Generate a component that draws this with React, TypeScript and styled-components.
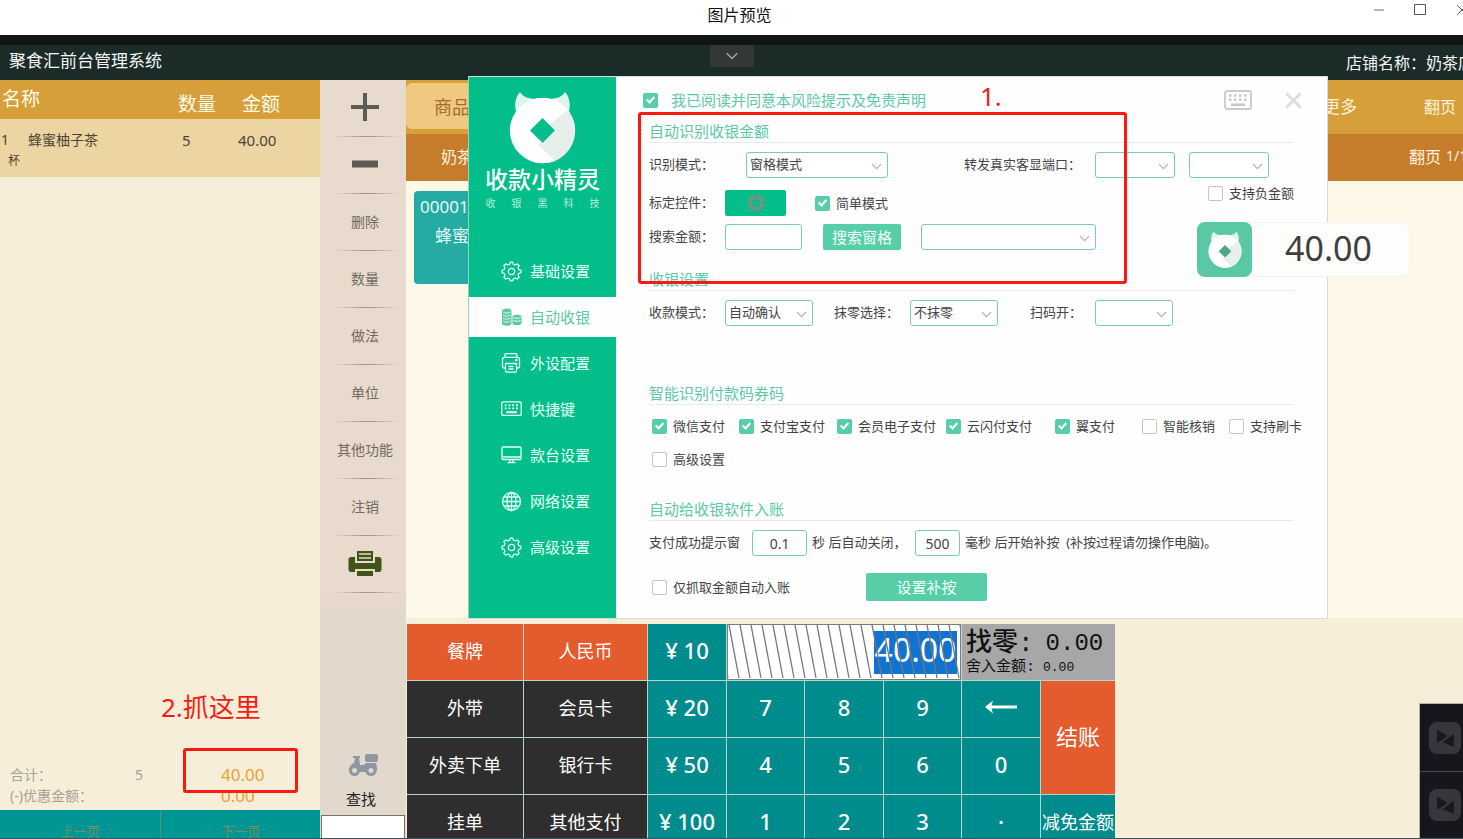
import React from 'react';
import styled, { createGlobalStyle, css } from 'styled-components';
import { ChevronDown, Minus, X } from 'lucide-react';

const GlobalStyle = createGlobalStyle`
  *, *::before, *::after { box-sizing: border-box; }
  body {
    margin: 0;
    overflow: hidden;
    font-family: "Noto Sans", "Noto Sans CJK SC", sans-serif;
    color: #444;
  }
  button, input, select { font-family: inherit; color: inherit; margin: 0; }
  button { border: 0; padding: 0; background: none; white-space: nowrap; }
  svg { display: block; flex: none; }
`;

const colors = {
  green: '#03bd8b',
  mint: '#57cda8',
  mintText: '#5cc8a6',
  teal: '#008c8c',
  orange: '#e45b2d',
  gold: '#d79f39',
  red: '#fb1a10',
};

/* ---------- Window frame ---------- */

const Window = styled.div`
  position: relative;
  display: flex;
  flex-direction: column;
  height: 100vh;
  overflow: hidden;
  border-bottom: 1px solid #40545c;
  background: #fff;
`;

const TitleBar = styled.header`
  display: grid;
  grid-template-columns: 1fr auto 1fr;
  flex: none;
  height: 35px;
  padding-left: 16px;
`;

const WindowTitle = styled.h1`
  grid-column: 2;
  margin: 0;
  font-size: 16px;
  line-height: 30px;
  font-weight: 400;
  color: #111;
`;

const WindowButtons = styled.div`
  display: flex;
  justify-content: flex-end;
  gap: 26px;
  height: 20px;
  margin-right: -8px;
  color: #555;
  button { display: flex; align-items: center; }
`;

const StoreBar = styled.div`
  display: grid;
  grid-template-columns: 1fr auto 1fr;
  flex: none;
  height: 45px;
  border-top: 10px solid #111413;
  background: #1a2b28;
  color: #f4f6f5;
  white-space: nowrap;
`;

const SystemName = styled.span`
  padding-left: 9px;
  font-size: 17px;
  line-height: 32px;
`;

const StoreName = styled.span`
  justify-self: end;
  width: 117px;
  overflow: hidden;
  font-size: 16px;
  line-height: 36px;
`;

const PullTab = styled.button`
  display: grid;
  place-items: center;
  width: 44px;
  height: 22px;
  background: #343737;
  color: #a5a9a8;
`;

const Body = styled.main`
  display: grid;
  grid-template-columns: 320px 86px minmax(0, 1fr);
  flex: 1;
  min-height: 0;
`;

/* ---------- Order list ---------- */

const OrderPanel = styled.section`
  display: flex;
  flex-direction: column;
  min-height: 0;
  background: #f7eed9;
`;

const OrderTable = styled.table`
  width: 100%;
  table-layout: fixed;
  border-collapse: collapse;
  th, td { padding: 0; text-align: left; font-weight: 400; }
  th {
    height: 39px;
    background: ${colors.gold};
    color: #fffbe9;
    font-size: 19px;
    line-height: 30px;
    vertical-align: bottom;
  }
  th:first-child { padding-left: 2px; vertical-align: top; line-height: 38px; }
  td {
    height: 58px;
    padding-top: 11px;
    background: #edd4a3;
    color: #4c4334;
    font-size: 15px;
    line-height: 20px;
    vertical-align: top;
  }
`;

const ItemLine = styled.div`
  display: grid;
  grid-template-columns: 27px 1fr;
  padding-left: 1px;
  font-size: 14px;
`;

const ItemUnit = styled.div`
  padding-left: 8px;
  font-size: 12px;
  line-height: 22px;
`;

const Quantity = styled.span`
  padding-left: 4px;
`;

const Totals = styled.dl`
  display: grid;
  grid-template-columns: 125px 86px 1fr;
  margin: auto 0 4px;
  padding-left: 10px;
  color: #a7a196;
  font-size: 14px;
  line-height: 21px;
  dt, dd { margin: 0; white-space: nowrap; }
`;

const TotalAmount = styled.dd`
  color: #eb9f35;
  font-size: 17px;
`;

const Pager = styled.div`
  display: grid;
  grid-template-columns: 1fr 1fr;
  flex: none;
  height: 28px;
  overflow: hidden;
  background: #009693;
`;

const PagerButton = styled.button`
  padding-top: 13px;
  color: #7f8a5c;
  font-size: 13px;
  line-height: 16px;
  & + & { border-left: 1px solid #4f9174; }
`;

/* ---------- Operation column ---------- */

const Operations = styled.nav`
  display: flex;
  flex-direction: column;
  min-height: 0;
  background: linear-gradient(#e8dacd 0, #e8dacd 514px, #e2d9cc 530px);
`;

const Operation = styled.button`
  position: relative;
  display: grid;
  place-items: center;
  flex: none;
  height: 57px;
  padding: 0 0 3px 4px;
  color: #706a62;
  font-size: 14px;
  &::after {
    content: '';
    position: absolute;
    left: 14px;
    right: 6px;
    bottom: 0;
    height: 1px;
    background: linear-gradient(90deg, transparent, #9c9287 50%, transparent);
  }
`;

const FindButton = styled.button`
  display: flex;
  flex-direction: column;
  align-items: center;
  gap: 12px;
  margin-top: auto;
  padding: 0 0 6px;
  padding-right: 4px;
  color: #222;
  font-size: 15px;
  line-height: 20px;
  svg { margin-left: 4px; }
`;

const FindInput = styled.input`
  flex: none;
  width: 84px;
  height: 23px;
  margin-left: 1px;
  border: 1px solid #77736c;
  border-bottom: 0;
  background: #fff;
`;

/* ---------- Catalogue ---------- */

const Catalogue = styled.section`
  display: flex;
  flex-direction: column;
  min-width: 0;
  min-height: 0;
  background: #f7eed9;
`;

const CategoryBar = styled.div<{ $sub?: boolean }>`
  display: flex;
  align-items: center;
  justify-content: space-between;
  flex: none;
  height: ${p => (p.$sub ? 47 : 54)}px;
  padding-bottom: 3px;
  background: ${p => (p.$sub ? '#c57d2c' : colors.gold)};
  color: #fff3dc;
  white-space: nowrap;
`;

const CategoryTab = styled.button<{ $active?: boolean }>`
  width: 120px;
  height: 46px;
  padding-left: ${p => (p.$active ? 28 : 35)}px;
  border-radius: 6px;
  background: ${p => (p.$active ? '#f0c981' : 'transparent')};
  color: ${p => (p.$active ? '#a06f27' : '#fff3dc')};
  font-size: ${p => (p.$active ? 18 : 16)}px;
  text-align: left;
`;

const CategoryEnd = styled.div<{ $width: number }>`
  display: flex;
  width: ${p => p.$width}px;
  overflow: hidden;
`;

const MoreButton = styled.button`
  width: 101px;
  text-align: left;
  font-size: 17px;
`;

const PageLabel = styled.button`
  font-size: 16px;
`;

const PageCount = styled.span`
  padding-left: 5px;
  font-size: 14px;
  line-height: 30px;
`;

const Products = styled.div`
  flex: 1;
  min-height: 0;
  padding: 10px 8px;
  background: #fef8e9;
`;

const Product = styled.button`
  display: flex;
  flex-direction: column;
  align-items: flex-start;
  gap: 5px;
  width: 120px;
  height: 93px;
  padding: 4px 6px;
  border-radius: 4px;
  background: #26aaa4;
  color: #e2fbf8;
  font-size: 17px;
  line-height: 24px;
`;

const ProductName = styled.span`
  padding-left: 15px;
`;

/* ---------- Keypad ---------- */

const KeypadArea = styled.div`
  flex: none;
  height: 220px;
  padding: 6px 0 0 1px;
  overflow: hidden;
`;

const Keypad = styled.div`
  display: grid;
  grid-template-columns: 116px 123px 78px 77px 78px 77px 78px 74px;
  grid-auto-rows: 56px;
  gap: 1px;
  width: max-content;
  background: #b9d3cf;
`;

type Tone = 'dark' | 'orange' | 'teal';
const tones: Record<Tone, string> = { dark: '#2e2e2e', orange: colors.orange, teal: colors.teal };

const Key = styled.button<{ $tone: Tone; $word?: boolean; $tall?: boolean }>`
  display: grid;
  place-items: center;
  padding-bottom: ${p => (p.$word ? 2 : 4)}px;
  background: ${p => tones[p.$tone]};
  color: #fff;
  font-size: ${p => (p.$word ? 18 : 22)}px;
  font-weight: ${p => (p.$word || p.$tall ? 400 : 500)};
  line-height: 30px;
  overflow: hidden;
  ${p => p.$tall && css`grid-row: span 2;`}
`;

const Display = styled.div`
  position: relative;
  grid-column: span 3;
  display: flex;
  align-items: center;
  justify-content: flex-end;
  padding-right: 3px;
  border: 1px solid #7c7c7c;
  background: #fff;
`;

const Hatch = styled.svg`
  position: absolute;
  inset: 0;
  width: 100%;
  height: 100%;
  pointer-events: none;
`;

const DisplayInput = styled.input`
  width: 83px;
  height: 43px;
  padding: 0 0 5px;
  border: 0;
  background: #0f73d2;
  color: #fff;
  font-size: 32px;
  text-align: center;
`;

const ChangePanel = styled.div`
  grid-column: span 2;
  padding: 5px 4px 0;
  background: #a7a7a7;
  color: #111;
  font-family: "Liberation Mono", "Noto Sans CJK SC", monospace;
  white-space: nowrap;
`;

const ChangeLine = styled.div<{ $large?: boolean }>`
  display: flex;
  align-items: center;
  font-size: ${p => (p.$large ? 26 : 15)}px;
  line-height: ${p => (p.$large ? 30 : 18)}px;
  font-weight: ${p => (p.$large ? 500 : 400)};
  span:last-child {
    font-size: ${p => (p.$large ? 24 : 13)}px;
    padding-left: ${p => (p.$large ? 12 : 8)}px;
  }
`;

/* ---------- Settings dialog ---------- */

const Dialog = styled.section`
  position: absolute;
  left: 468px;
  top: 76px;
  display: flex;
  width: 860px;
  height: 543px;
  border: 1px solid #d9dcd6;
  border-left-color: #8fd9bf;
  background: #fefefe;
  font-size: 13px;
  line-height: 20px;
`;

const Sidebar = styled.aside`
  display: flex;
  flex-direction: column;
  flex: none;
  width: 147px;
  padding-top: 15px;
  background: ${colors.green};
  color: #e9fff8;
`;

const Brand = styled.div`
  display: flex;
  flex-direction: column;
  align-items: center;
  height: 159px;
`;

const BrandName = styled.strong`
  margin-top: 2px;
  font-size: 23px;
  line-height: 26px;
  font-weight: 500;
  color: #fff;
`;

const BrandTagline = styled.div`
  display: flex;
  justify-content: space-between;
  width: 114px;
  margin-top: 4px;
  font-size: 10px;
  line-height: 14px;
  color: #b5f0dd;
`;

const SideMenu = styled.nav`
  display: flex;
  flex-direction: column;
  gap: 6px;
`;

const SideItem = styled.button<{ $active?: boolean }>`
  display: flex;
  align-items: center;
  gap: 8px;
  height: 40px;
  padding-left: 32px;
  background: ${p => (p.$active ? '#fefefe' : 'transparent')};
  color: ${p => (p.$active ? colors.mintText : '#e4fff7')};
  font-size: 15px;
  span { padding-bottom: 2px; }
`;

const Content = styled.div`
  flex: 1;
  min-width: 0;
  padding: 13px 20px 0 27px;
`;

const DialogHead = styled.div`
  display: flex;
  align-items: center;
  justify-content: space-between;
  height: 20px;
`;

const DialogTools = styled.div`
  display: flex;
  align-items: center;
  gap: 29px;
  padding-right: 1px;
  color: #c9c9c9;
  button + button { color: #dedede; }
`;

const Section = styled.section<{ $top: number }>`
  margin: ${p => p.$top}px 13px 0 6px;
`;

const SectionTitle = styled.h2`
  margin: 0 0 9px;
  padding-bottom: 2px;
  border-bottom: 1px solid #e9ebea;
  color: ${colors.mintText};
  font-size: 15px;
  line-height: 18px;
  font-weight: 400;
`;

const Row = styled.div<{ $top?: number }>`
  display: flex;
  align-items: center;
  min-height: 26px;
  margin-top: ${p => p.$top ?? 0}px;
  white-space: nowrap;
`;

const Split = styled.div`
  display: flex;
  justify-content: space-between;
`;

const FieldLabel = styled.label<{ $width?: number; $before?: number }>`
  flex: none;
  width: ${p => (p.$width ? `${p.$width}px` : 'auto')};
  margin-left: ${p => p.$before ?? 0}px;
  padding-bottom: 2px;
`;

const field = css`
  height: 26px;
  border: 1px solid #79cdb2;
  border-radius: 3px;
  background: #fff;
  font-size: 13px;
`;

const SelectBox = styled.span<{ $width: number; $before?: number }>`
  position: relative;
  flex: none;
  width: ${p => p.$width}px;
  margin-left: ${p => p.$before ?? 0}px;
  svg { position: absolute; right: 3px; top: 6px; color: #aeb3b1; pointer-events: none; }
`;

const Select = styled.select`
  ${field}
  display: block;
  width: 100%;
  padding: 0 20px 2px 3px;
  appearance: none;
`;

const TextInput = styled.input<{ $width: number; $before?: number; $after?: number }>`
  ${field}
  flex: none;
  width: ${p => p.$width}px;
  margin: 0 ${p => p.$after ?? 0}px 0 ${p => p.$before ?? 0}px;
  font-size: 14px;
  text-align: center;
`;

const SolidButton = styled.button<{ $width: number; $before?: number; $deep?: boolean; $tall?: boolean }>`
  display: grid;
  place-items: center;
  flex: none;
  width: ${p => p.$width}px;
  height: ${p => (p.$tall ? 28 : 26)}px;
  margin-left: ${p => p.$before ?? 0}px;
  border-radius: 2px;
  background: ${p => (p.$deep ? colors.green : colors.mint)};
  color: #f4fffb;
  font-size: 15px;
  line-height: 24px;
`;

const CheckLabel = styled.label<{ $before?: number; $head?: boolean }>`
  display: flex;
  align-items: center;
  gap: ${p => (p.$head ? 13 : 6)}px;
  margin-left: ${p => p.$before ?? 0}px;
  white-space: nowrap;
  ${p => p.$head && css`color: ${colors.mintText}; font-size: 15px;`}
`;

const CheckBox = styled.input`
  position: relative;
  flex: none;
  width: 15px;
  height: 15px;
  border: 1px solid #c3c6c5;
  border-radius: 2px;
  background: #fff;
  appearance: none;
  &:checked { border-color: ${colors.mint}; background: ${colors.mint}; }
  &:checked::after {
    content: '';
    position: absolute;
    left: 4px;
    top: 1px;
    width: 5px;
    height: 8px;
    border: solid #fff;
    border-width: 0 2px 2px 0;
    transform: rotate(42deg);
  }
`;

const PayGrid = styled.div`
  display: grid;
  grid-template-columns: 87px 98px 109px 109px 87px 87px 70px;
  row-gap: 13px;
  padding: 2px 0 1px 3px;
`;

const NegativeRow = styled.div`
  display: flex;
  justify-content: flex-end;
  margin-top: 5px;
`;

/* ---------- Overlays ---------- */

const AmountWidget = styled.div`
  position: absolute;
  left: 1197px;
  top: 222px;
  display: flex;
  align-items: center;
  width: 213px;
  height: 55px;
  border: 1px solid #f3f2ee;
  border-radius: 8px;
  background: #fdfdfc;
  color: #3f3f3f;
  font-size: 34px;
  line-height: 50px;
  span { padding-bottom: 4px; }
`;

const WidgetIcon = styled.div`
  display: grid;
  place-items: center;
  width: 55px;
  height: 55px;
  margin: 0 33px 0 -1px;
  border-radius: 8px;
  background: #59c9a5;
`;

const Frame = styled.div<{ $x: number; $y: number; $w: number; $h: number }>`
  position: absolute;
  left: ${p => p.$x}px;
  top: ${p => p.$y}px;
  width: ${p => p.$w}px;
  height: ${p => p.$h}px;
  border: 3px solid ${colors.red};
  border-radius: 3px;
  pointer-events: none;
`;

const Note = styled.span<{ $x: number; $y: number }>`
  position: absolute;
  left: ${p => p.$x}px;
  top: ${p => p.$y}px;
  color: ${colors.red};
  font-size: 26px;
  line-height: 32px;
  white-space: nowrap;
`;

const CornerDock = styled.div`
  position: absolute;
  right: 0;
  bottom: 0;
  width: 44px;
  border: 1px solid #b9b4a2;
  border-width: 1px 0 0 1px;
  background: #15171c;
`;

const DockButton = styled.button`
  display: flex;
  align-items: center;
  width: 100%;
  height: 67px;
  padding-left: 9px;
  & + & { border-top: 1px solid #4a4c50; }
`;

/* ---------- Drawings ---------- */

function Mascot({ width, height, hole }: { width: number; height: number; hole: string }) {
  return (
    <svg width={width} height={height} viewBox="0 0 67 72" aria-hidden="true">
      <path d="M7 19C5 12 7 4 11 0c3 5 9 7 17 7h11c8 0 14-2 17-7 4 4 6 12 4 19z" fill="#def5ee" />
      <circle cx="33.500" cy="38.500" r="32.700" fill="#fff" />
      <path d="M59 18 46 28 33.500 38.500 46 39 33.500 51l-6 1L46 69c17-7 27-31 13-51z" fill="#e6efec" />
      <path d="M14 38 46 69c-8 3-17 3-24 0z" fill="#fff" />
      <path d="m33.500 26 12.500 12.500L33.500 51 21 38.500z" fill={hole} />
    </svg>
  );
}

function CoinsIcon() {
  return (
    <svg width="21" height="20" viewBox="0 0 21 20" aria-hidden="true">
      <path d="M1 4c0-3.500 9.500-3.500 9.500 0v12.500c0 3-9.500 3-9.500 0z" fill="currentColor" />
      <path d="M11.500 9.500c0-2.500 9-2.500 9 0V16c0 3-9 3-9 0z" fill="currentColor" />
      <path d="M2 5c1.500 1.500 6 1.500 7.500 0M2 8c1.500 1.500 6 1.500 7.500 0M2 11c1.500 1.500 6 1.500 7.500 0M2 14c1.500 1.500 6 1.500 7.500 0M12.500 10.500c1.500 1 5.500 1 7 0M12.500 13.500c1.500 1 5.500 1 7 0" fill="none" stroke="#e8fbf4" strokeWidth="1" />
    </svg>
  );
}

function ReceiptPrinterIcon() {
  return (
    <svg width="21" height="20" viewBox="0 0 21 20" fill="none" stroke="currentColor" strokeWidth="1.300" aria-hidden="true">
      <path d="M4 4V2c0-.8.500-1.300 1.300-1.300h9.400c.8 0 1.300.5 1.300 1.300v2M4.500 15H3c-1 0-1.500-.5-1.500-1.500v-7C1.500 5 2.200 4.300 3.500 4.300h13c1.300 0 2 .7 2 2.200v7c0 1-.5 1.500-1.500 1.500h-1.500" />
      <path d="M4.500 10.500h11v7c0 1-.5 1.700-1.500 1.700H6c-1 0-1.500-.7-1.500-1.700zM7.500 13.500h5M7.500 16h5" />
      <path d="M14 7h2.500" strokeWidth="2" />
    </svg>
  );
}

function KeyboardIcon({ width, heavy }: { width: number; heavy?: boolean }) {
  return (
    <svg width={width} height={heavy ? 20 : 16} viewBox={heavy ? '0 0 28 20' : '0 0 28 21'} fill="none" stroke="currentColor" strokeWidth="1.800" aria-hidden="true">
      <rect x="1" y="1" width="26" height="18" rx="2" />
      <path d="M5 5.500h2.500M10 5.500h2.500M15 5.500h2.500M20 5.500h2.500M5 9.700h2.500M10 9.700h2.500M15 9.700h2.500M20 9.700h2.500" strokeWidth="2.400" />
      <path d="M7 14.800h14" strokeWidth="2.600" />
    </svg>
  );
}

function MonitorIcon() {
  return (
    <svg width="21" height="18" viewBox="0 0 21 18" fill="none" stroke="currentColor" strokeWidth="1.300" aria-hidden="true">
      <rect x="1" y="1" width="19" height="12.500" rx="1" />
      <path d="M1.500 11h18M9 13.500v2.800M12 13.500v2.800M6.500 16.700h8" />
    </svg>
  );
}

function GlobeIcon() {
  return (
    <svg width="21" height="21" viewBox="0 0 21 21" fill="none" stroke="currentColor" strokeWidth="1.300" aria-hidden="true">
      <circle cx="10.500" cy="10.500" r="9" />
      <ellipse cx="10.500" cy="10.500" rx="4.500" ry="9" />
      <path d="M10.500 1.500v18M1.500 10.500h18M3 6h15M3 15h15" />
    </svg>
  );
}

function GearIcon() {
  return (
    <svg width="21" height="21" viewBox="0 0 20 20" fill="none" stroke="currentColor" strokeWidth="1.200" strokeLinejoin="round" aria-hidden="true">
      <path d="m8.300 3 .5-2h2.400l.5 2 2 .8 1.800-1.100 1.800 1.800-1.100 1.800.8 2 2 .5v2.400l-2 .5-.8 2 1.100 1.800-1.800 1.800-1.800-1.100-2 .8-.5 2H8.800l-.5-2-2-.8-1.800 1.100-1.800-1.800 1.100-1.800-.8-2-2-.5V8.800l2-.5.8-2-1.100-1.800 1.800-1.800 1.800 1.100z" />
      <circle cx="10" cy="10" r="3" />
    </svg>
  );
}

function TargetIcon() {
  return (
    <svg width="20" height="20" viewBox="0 0 20 20" fill="none" aria-hidden="true">
      <circle cx="10" cy="10" r="6.500" stroke="#78947f" strokeWidth="4" />
      <path d="M10 0v7M10 13v7M0 10h7M13 10h7" stroke={colors.green} strokeWidth="1.500" />
      <path d="M10 5v3M10 12v3M5 10h3M12 10h3" stroke="#78947f" strokeWidth="1.500" />
    </svg>
  );
}

function PrinterIcon() {
  return (
    <svg width="34" height="27" viewBox="0 0 34 27" aria-hidden="true">
      <path d="M3 7h4v6h20V7h4c1.500 0 2.500 1 2.500 2.500v10c0 1.500-1 2.500-2.500 2.500h-4v-3H7v3H3C1.500 22 .5 21 .5 19.500v-10C.5 8 1.500 7 3 7z" fill="#405419" />
      <path d="M9 1h16v10H9z" fill="#405419" />
      <path d="M11 4h12M11 8h12" stroke="#e8dacd" strokeWidth="1.500" />
      <path d="M9 21h16v5H9z" fill="#405419" />
    </svg>
  );
}

function ScooterIcon() {
  return (
    <svg width="31" height="24" viewBox="0 0 31 24" fill="#8e97a3" aria-hidden="true">
      <rect x="17" y="1" width="13" height="8" rx="2" />
      <path d="M5 3h7v2h-1l1 7h4l2-2h10l1 5v3h-3v-2H8v2H1c0-4 2-7 5-8l1-5H5z" />
      <circle cx="6.500" cy="17.500" r="4" fill="#e2d9cc" stroke="#8e97a3" strokeWidth="3" />
      <circle cx="23" cy="17.500" r="4" fill="#e2d9cc" stroke="#8e97a3" strokeWidth="3" />
      <path d="M10 15h9v4h-9z" />
    </svg>
  );
}

function DockIcon() {
  return (
    <svg width="32" height="32" viewBox="0 0 32 32" aria-hidden="true">
      <rect width="32" height="32" rx="8" fill="#35373c" />
      <path d="M8 7.500 18.500 14 8 21zM25 12v13l-12-5z" fill="#17191e" />
      <path d="m11 21.500 11-9" stroke="#35373c" strokeWidth="1.500" />
    </svg>
  );
}

function BackArrow() {
  return (
    <svg width="34" height="16" viewBox="0 0 34 16" aria-hidden="true">
      <path d="M4 8h29" stroke="#fff" strokeWidth="3" />
      <path d="M9 1.500 1 8l8 6.500L7 8z" fill="#fff" />
    </svg>
  );
}

/* ---------- Composed controls ---------- */

interface DropDownProps { label: string; id?: string; value?: string; width: number; before?: number }

function DropDown({ label, id, value = '', width, before }: DropDownProps) {
  return (
    <SelectBox $width={width} $before={before}>
      <Select id={id} aria-label={label} defaultValue={value}>
        <option value={value}>{value}</option>
      </Select>
      <ChevronDown size={17} strokeWidth={1.8} />
    </SelectBox>
  );
}

interface CheckProps { text: string; checked?: boolean; before?: number; head?: boolean }

function Check({ text, checked, before, head }: CheckProps) {
  return (
    <CheckLabel $before={before} $head={head}>
      <CheckBox type="checkbox" defaultChecked={checked} />
      {text}
    </CheckLabel>
  );
}

const menu = [
  { text: '基础设置', icon: <GearIcon /> },
  { text: '自动收银', icon: <CoinsIcon />, active: true },
  { text: '外设配置', icon: <ReceiptPrinterIcon /> },
  { text: '快捷键', icon: <KeyboardIcon width={21} /> },
  { text: '款台设置', icon: <MonitorIcon /> },
  { text: '网络设置', icon: <GlobeIcon /> },
  { text: '高级设置', icon: <GearIcon /> },
];

const payments = [
  { text: '微信支付', checked: true },
  { text: '支付宝支付', checked: true },
  { text: '会员电子支付', checked: true },
  { text: '云闪付支付', checked: true },
  { text: '翼支付', checked: true },
  { text: '智能核销' },
  { text: '支持刷卡' },
  { text: '高级设置' },
];

function SettingsDialog() {
  return (
    <Dialog role="dialog" aria-label="收款小精灵">
      <Sidebar>
        <Brand>
          <Mascot width={67} height={72} hole={colors.green} />
          <BrandName>收款小精灵</BrandName>
          <BrandTagline>
            {['收', '银', '黑', '科', '技'].map(c => <span key={c}>{c}</span>)}
          </BrandTagline>
        </Brand>
        <SideMenu>
          {menu.map(m => (
            <SideItem key={m.text} $active={m.active}>{m.icon}<span>{m.text}</span></SideItem>
          ))}
        </SideMenu>
      </Sidebar>
      <Content>
        <DialogHead>
          <Check head checked text="我已阅读并同意本风险提示及免责声明" />
          <DialogTools>
            <button aria-label="键盘"><KeyboardIcon width={28} heavy /></button>
            <button aria-label="关闭"><X size={25} strokeWidth={3} /></button>
          </DialogTools>
        </DialogHead>

        <Section $top={12}>
          <SectionTitle>自动识别收银金额</SectionTitle>
          <Split>
            <div>
              <Row>
                <FieldLabel $width={97} htmlFor="mode">识别模式：</FieldLabel>
                <DropDown id="mode" label="识别模式" value="窗格模式" width={142} />
              </Row>
              <Row $top={12}>
                <FieldLabel $width={76} htmlFor="target">标定控件：</FieldLabel>
                <SolidButton id="target" $width={61} $deep><TargetIcon /></SolidButton>
                <Check checked text="简单模式" before={29} />
              </Row>
            </div>
            <div>
              <Row>
                <FieldLabel $width={131} htmlFor="port">转发真实客显端口：</FieldLabel>
                <DropDown id="port" label="转发真实客显端口" width={80} />
                <DropDown label="波特率" width={80} before={14} />
                <FieldLabel as="span" $width={25} />
              </Row>
              <NegativeRow><Check text="支持负金额" /></NegativeRow>
            </div>
          </Split>
          <Row $top={8}>
            <FieldLabel $width={76} htmlFor="amount">搜索金额：</FieldLabel>
            <TextInput id="amount" $width={77} />
            <SolidButton $width={78} $before={21}>搜索窗格</SolidButton>
            <DropDown label="窗格" width={175} before={20} />
          </Row>
        </Section>

        <Section $top={20}>
          <SectionTitle>收银设置</SectionTitle>
          <Row>
            <FieldLabel $width={76} htmlFor="collect">收款模式：</FieldLabel>
            <DropDown id="collect" label="收款模式" value="自动确认" width={88} />
            <FieldLabel $width={76} $before={21} htmlFor="round">抹零选择：</FieldLabel>
            <DropDown id="round" label="抹零选择" value="不抹零" width={88} />
            <FieldLabel $width={65} $before={32} htmlFor="scan">扫码开：</FieldLabel>
            <DropDown id="scan" label="扫码开" width={78} />
          </Row>
        </Section>

        <Section $top={58}>
          <SectionTitle>智能识别付款码券码</SectionTitle>
          <PayGrid>
            {payments.map(p => <Check key={p.text} text={p.text} checked={p.checked} />)}
          </PayGrid>
        </Section>

        <Section $top={30}>
          <SectionTitle>自动给收银软件入账</SectionTitle>
          <Row>
            <FieldLabel htmlFor="close">支付成功提示窗</FieldLabel>
            <TextInput id="close" defaultValue="0.1" $width={55} $before={12} $after={5} />
            <FieldLabel $width={98} htmlFor="delay">秒 后自动关闭，</FieldLabel>
            <TextInput id="delay" defaultValue="500" $width={45} $before={5} $after={5} />
            <FieldLabel as="span">毫秒 后开始补按&nbsp; (补按过程请勿操作电脑)。</FieldLabel>
          </Row>
          <Row $top={17}>
            <Check text="仅抓取金额自动入账" before={3} />
            <SolidButton $width={121} $before={76} $tall>设置补按</SolidButton>
          </Row>
        </Section>
      </Content>
    </Dialog>
  );
}

const hatchLines = Array.from({ length: 23 }, (_, i) => i * 11 - 10);

function PaymentKeypad() {
  return (
    <Keypad>
      <Key $tone="orange" $word>餐牌</Key>
      <Key $tone="orange" $word>人民币</Key>
      <Key $tone="teal">¥ 10</Key>
      <Display>
        <DisplayInput aria-label="实收金额" defaultValue="40.00" />
        <Hatch aria-hidden="true">
          {hatchLines.map(x => (
            <line key={x} x1={x} y1="0" x2={x + 10} y2="53" stroke="#777" strokeWidth="1.300" />
          ))}
        </Hatch>
      </Display>
      <ChangePanel>
        <ChangeLine $large><span>找零:</span><span>0.00</span></ChangeLine>
        <ChangeLine><span>舍入金额:</span><span>0.00</span></ChangeLine>
      </ChangePanel>

      <Key $tone="dark" $word>外带</Key>
      <Key $tone="dark" $word>会员卡</Key>
      <Key $tone="teal">¥ 20</Key>
      <Key $tone="teal">7</Key>
      <Key $tone="teal">8</Key>
      <Key $tone="teal">9</Key>
      <Key $tone="teal" aria-label="退格"><BackArrow /></Key>
      <Key $tone="orange" $tall>结账</Key>

      <Key $tone="dark" $word>外卖下单</Key>
      <Key $tone="dark" $word>银行卡</Key>
      <Key $tone="teal">¥ 50</Key>
      <Key $tone="teal">4</Key>
      <Key $tone="teal">5</Key>
      <Key $tone="teal">6</Key>
      <Key $tone="teal">0</Key>

      <Key $tone="dark" $word>挂单</Key>
      <Key $tone="dark" $word>其他支付</Key>
      <Key $tone="teal">¥ 100</Key>
      <Key $tone="teal">1</Key>
      <Key $tone="teal">2</Key>
      <Key $tone="teal">3</Key>
      <Key $tone="teal">·</Key>
      <Key $tone="teal" $word>减免金额</Key>
    </Keypad>
  );
}

const operations = ['删除', '数量', '做法', '单位', '其他功能', '注销'];

export default function App() {
  return (
    <Window>
      <GlobalStyle />
      <TitleBar>
        <WindowTitle>图片预览</WindowTitle>
        <WindowButtons>
          <button aria-label="最小化"><Minus size={16} strokeWidth={1.3} /></button>
          <button aria-label="最大化">
            <svg width="14" height="14" viewBox="0 0 14 14"><path d="M1.500 1.500h11v10h-11z" fill="none" stroke="#555" /></svg>
          </button>
          <button aria-label="关闭窗口"><X size={18} strokeWidth={1.3} /></button>
        </WindowButtons>
      </TitleBar>
      <StoreBar>
        <SystemName>聚食汇前台管理系统</SystemName>
        <PullTab aria-label="展开"><ChevronDown size={20} strokeWidth={1.5} /></PullTab>
        <StoreName>店铺名称：奶茶店</StoreName>
      </StoreBar>

      <Body>
        <OrderPanel>
          <OrderTable>
            <colgroup><col width="178" /><col width="60" /><col width="82" /></colgroup>
            <thead>
              <tr><th>名称</th><th>数量</th><th><Quantity>金额</Quantity></th></tr>
            </thead>
            <tbody>
              <tr>
                <td>
                  <ItemLine><span>1</span><span>蜂蜜柚子茶</span></ItemLine>
                  <ItemUnit>杯</ItemUnit>
                </td>
                <td><Quantity>5</Quantity></td>
                <td>40.00</td>
              </tr>
            </tbody>
          </OrderTable>
          <Totals>
            <dt>合计：</dt><dd>5</dd><TotalAmount>40.00</TotalAmount>
            <dt>(-)优惠金额：</dt><dd /><TotalAmount>0.00</TotalAmount>
          </Totals>
          <Pager>
            <PagerButton>上一页</PagerButton>
            <PagerButton>下一页</PagerButton>
          </Pager>
        </OrderPanel>

        <Operations>
          <Operation aria-label="增加">
            <svg width="30" height="30" viewBox="0 0 30 30"><path d="M15 1v28M1 15h28" stroke="#5e5b56" strokeWidth="4" /></svg>
          </Operation>
          <Operation aria-label="减少">
            <svg width="26" height="8" viewBox="0 0 26 8"><path d="M0 4h26" stroke="#5e5b56" strokeWidth="7" /></svg>
          </Operation>
          {operations.map(o => <Operation key={o}>{o}</Operation>)}
          <Operation aria-label="打印"><PrinterIcon /></Operation>
          <FindButton><ScooterIcon />查找</FindButton>
          <FindInput aria-label="查找" />
        </Operations>

        <Catalogue>
          <CategoryBar>
            <CategoryTab $active>商品</CategoryTab>
            <CategoryEnd $width={140}>
              <MoreButton>更多</MoreButton>
              <PageLabel>翻页</PageLabel>
            </CategoryEnd>
          </CategoryBar>
          <CategoryBar $sub>
            <CategoryTab>奶茶</CategoryTab>
            <CategoryEnd $width={54}>
              <PageLabel>翻页</PageLabel>
              <PageCount>1/1</PageCount>
            </CategoryEnd>
          </CategoryBar>
          <Products>
            <Product><span>00001</span><ProductName>蜂蜜柚子茶</ProductName></Product>
          </Products>
          <KeypadArea><PaymentKeypad /></KeypadArea>
        </Catalogue>
      </Body>

      <SettingsDialog />

      <AmountWidget>
        <WidgetIcon><Mascot width={34} height={38} hole="#4aa98a" /></WidgetIcon>
        <span>40.00</span>
      </AmountWidget>
      <CornerDock>
        <DockButton aria-label="视频一"><DockIcon /></DockButton>
        <DockButton aria-label="视频二"><DockIcon /></DockButton>
      </CornerDock>
      <Frame $x={638} $y={112} $w={489} $h={172} />
      <Frame $x={183} $y={748} $w={115} $h={45} />
      <Note $x={980} $y={80}>1.</Note>
      <Note $x={161} $y={691}>2.抓这里</Note>
    </Window>
  );
}
